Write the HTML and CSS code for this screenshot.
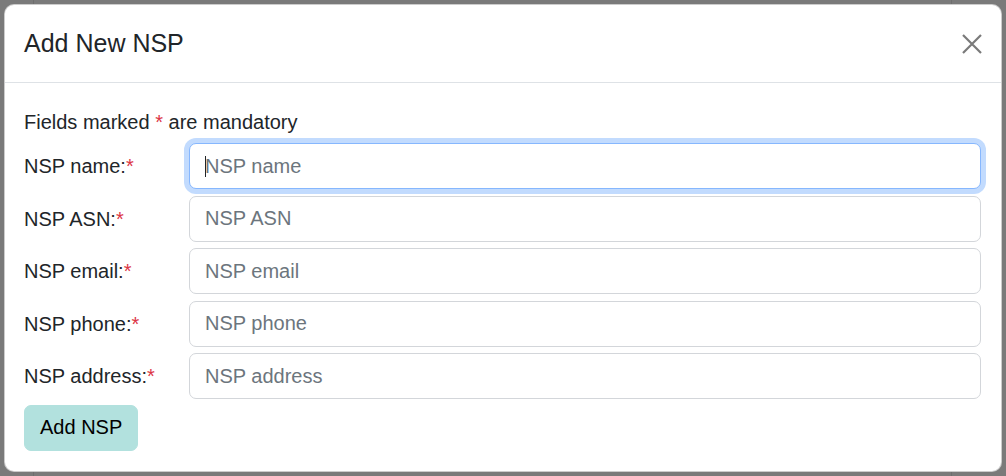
FILE: index.html
```html
<!DOCTYPE html>
<html lang="en">
<head>
<meta charset="utf-8">
<title>Add New NSP</title>
<link rel="stylesheet" href="styles.css">
</head>
<body>
<div class="modal">
  <div class="modal-header">
    <h5 class="modal-title">Add New NSP</h5>
    <button class="btn-close" type="button" aria-label="Close">
      <svg width="20" height="20" viewBox="0 0 20 20"><path d="M1 1 L19 19 M19 1 L1 19" stroke="currentColor" stroke-width="2.2" fill="none"/></svg>
    </button>
  </div>
  <div class="modal-body">
    <p class="intro">Fields marked <span class="req">*</span> are mandatory</p>
    <form class="form">
      <div class="row">
        <label class="label">NSP name:<span class="req">*</span></label>
        <div class="field">
          <input class="control focused" type="text" placeholder="NSP name">
          <span class="caret"></span>
        </div>
      </div>
      <div class="row">
        <label class="label">NSP ASN:<span class="req">*</span></label>
        <div class="field"><input class="control" type="text" placeholder="NSP ASN"></div>
      </div>
      <div class="row">
        <label class="label">NSP email:<span class="req">*</span></label>
        <div class="field"><input class="control" type="text" placeholder="NSP email"></div>
      </div>
      <div class="row">
        <label class="label">NSP phone:<span class="req">*</span></label>
        <div class="field"><input class="control" type="text" placeholder="NSP phone"></div>
      </div>
      <div class="row">
        <label class="label">NSP address:<span class="req">*</span></label>
        <div class="field"><input class="control" type="text" placeholder="NSP address"></div>
      </div>
      <button class="btn-submit" type="button">Add NSP</button>
    </form>
  </div>
</div>
</body>
</html>
```

FILE: styles.css
```css
* { box-sizing: border-box; }

html, body {
  margin: 0;
  height: 100%;
}

body {
  background-color: #7a7a7a;
  background-image:
    linear-gradient(90deg, transparent 33px, #6e6e6e 33px, #6e6e6e 34px, transparent 34px),
    linear-gradient(90deg, transparent 951px, #6e6e6e 951px, #6e6e6e 952px, transparent 952px);
  font-family: "Liberation Sans", Arial, sans-serif;
  font-size: 20px;
  line-height: 1.5;
  color: #212529;
  padding: 4px;
  overflow: hidden;
}

.modal {
  width: 998px;
  height: 468px;
  background: #fff;
  border: 1px solid rgba(0, 0, 0, 0.2);
  border-radius: 10px;
  display: flex;
  flex-direction: column;
}

.modal-header {
  height: 78px;
  flex: none;
  display: flex;
  align-items: center;
  justify-content: space-between;
  padding: 0 19px 0 19px;
  border-bottom: 1px solid #dee2e6;
}

.modal-title {
  margin: 0;
  font-size: 25px;
  font-weight: 400;
  line-height: 1.5;
  color: #212529;
}

.btn-close {
  border: 0;
  background: transparent;
  padding: 0;
  width: 20px;
  height: 20px;
  color: #7a7a7a;
  display: flex;
}

.modal-body {
  padding: 24px 20px 20px 19px;
}

.intro {
  margin: 0 0 6px;
  line-height: 30px;
}

.req {
  color: #dc3545;
}

.form {
  display: flex;
  flex-direction: column;
  gap: 6.5px;
}

.row {
  display: grid;
  grid-template-columns: 165px 1fr;
  align-items: center;
}

.label {
  line-height: 30px;
}

.field {
  position: relative;
}

.control {
  display: block;
  width: 100%;
  height: 46px;
  padding: 0 15px;
  font-family: inherit;
  font-size: 20px;
  color: #212529;
  background: #fff;
  border: 1px solid #d3d6da;
  border-radius: 7px;
  outline: none;
}

.control::placeholder {
  color: #6c757d;
  opacity: 1;
}

.control.focused {
  border-color: #86b7fe;
  box-shadow: 0 0 0 5px rgba(13, 110, 253, 0.25);
}

.caret {
  position: absolute;
  left: 16px;
  top: 13px;
  width: 1px;
  height: 21px;
  background: #212529;
}

.btn-submit {
  align-self: flex-start;
  margin-top: -1px;
  height: 46px;
  padding: 0 15px;
  font-family: inherit;
  font-size: 20px;
  color: #000;
  background: #b2e1de;
  border: 1px solid #b2e1de;
  border-radius: 7px;
}
```
